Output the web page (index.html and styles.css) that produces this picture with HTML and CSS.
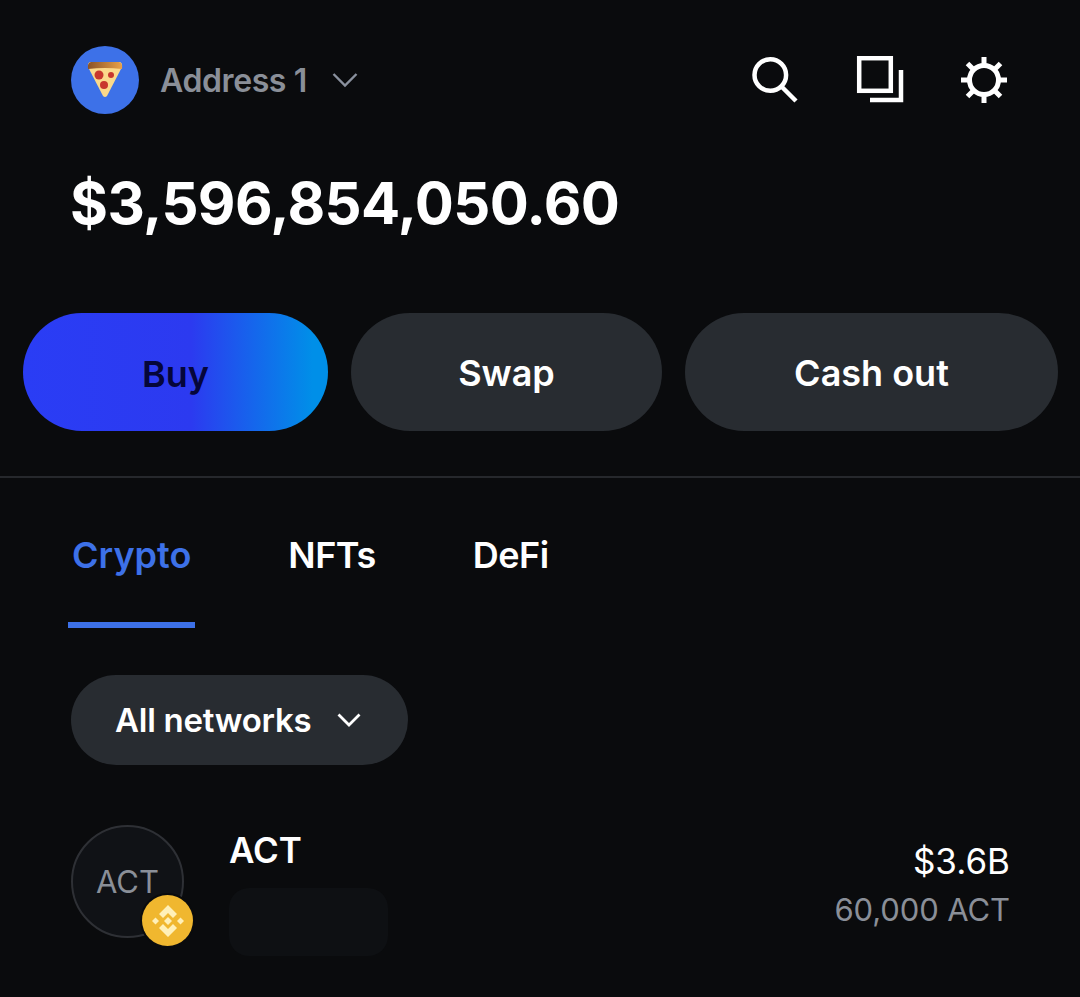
FILE: index.html
```html
<!DOCTYPE html>
<html lang="en">
<head>
    <meta charset="UTF-8">
    <meta name="viewport" content="width=device-width, initial-scale=1.0">
    <title>Wallet</title>
    <link rel="stylesheet" href="styles.css">
</head>
<body>
    <div class="header">
        <div class="account">
            <div class="avatar">
                <svg width="40" height="38" viewBox="0 0 40 38">
                    <defs>
                        <linearGradient id="crust" x1="0" x2="1" y1="0" y2="0">
                            <stop offset="0" stop-color="#8a5226"/>
                            <stop offset="1" stop-color="#e9a24a"/>
                        </linearGradient>
                    </defs>
                    <path d="M3 6 Q2.500 2 5 1 H35 Q37.500 2 37 6 L22 35 Q20 37 18 35 Z" fill="#fbd98a"/>
                    <path d="M3 8 Q2 2 6 1 H34 Q38 2 37 8 Q20 6 3 8 Z" fill="url(#crust)"/>
                    <circle cx="14" cy="14" r="4.500" fill="#c8372d"/>
                    <circle cx="26" cy="14" r="3" fill="#c8372d"/>
                    <circle cx="19" cy="24" r="4" fill="#c8372d"/>
                </svg>
            </div>
            <span class="account-name">Address 1</span>
            <svg class="account-caret" width="26" height="16" viewBox="0 0 26 16">
                <path d="M1.500 2 L13 13.500 L24.500 2" fill="none" stroke="#8a919e" stroke-width="2.400"/>
            </svg>
        </div>
        <div class="header-icons">
            <svg width="48" height="48" viewBox="0 0 48 48">
                <circle cx="18.300" cy="19" r="15.800" fill="none" stroke="#fff" stroke-width="4.500"/>
                <path d="M29 30 L44 45" stroke="#fff" stroke-width="4.500" fill="none"/>
            </svg>
            <svg width="48" height="48" viewBox="0 0 48 48">
                <rect x="3.200" y="2.200" width="31.600" height="32.600" fill="none" stroke="#fff" stroke-width="4.500"/>
                <path d="M14 44 H45 V14" fill="none" stroke="#fff" stroke-width="4.500"/>
            </svg>
            <svg width="48" height="48" viewBox="0 0 48 48">
                <circle cx="24" cy="24" r="14.500" fill="none" stroke="#fff" stroke-width="5"/>
                <path d="M24 1 V10 M24 38 V47 M1 24 H10 M38 24 H47 M7.500 7.500 L14 14 M34 34 L40.500 40.500 M40.500 7.500 L34 14 M14 34 L7.500 40.500" stroke="#fff" stroke-width="5" fill="none"/>
            </svg>
        </div>
    </div>

    <div class="balance">$3,596,854,050.60</div>

    <div class="actions">
        <div class="action action-buy">Buy</div>
        <div class="action action-swap">Swap</div>
        <div class="action action-cash">Cash out</div>
    </div>

    <div class="tabs">
        <div class="tab tab-active">Crypto</div>
        <div class="tab">NFTs</div>
        <div class="tab">DeFi</div>
    </div>

    <div class="filter">
        <div class="chip">
            All networks
            <svg width="24" height="14" viewBox="0 0 24 14">
                <path d="M1.500 1.500 L12 12 L22.500 1.500" fill="none" stroke="#fff" stroke-width="2.800"/>
            </svg>
        </div>
    </div>

    <div class="asset">
        <div class="asset-logo">
            <div class="asset-circle">ACT</div>
            <div class="chain-badge">
                <svg width="36" height="36" viewBox="0 0 36 36">
                    <g fill="#fff0b8">
                        <path d="M18 2 L27 11 L23 15 L18 10 L13 15 L9 11 Z"/>
                        <path d="M18 34 L27 25 L23 21 L18 26 L13 21 L9 25 Z"/>
                        <path d="M18 14 L22 18 L18 22 L14 18 Z"/>
                        <path d="M5.500 14.500 L9 18 L5.500 21.500 L2 18 Z"/>
                        <path d="M30.500 14.500 L34 18 L30.500 21.500 L27 18 Z"/>
                    </g>
                </svg>
            </div>
        </div>
        <div class="asset-info">
            <div class="asset-name">ACT</div>
            <div class="asset-placeholder"></div>
        </div>
        <div class="asset-values">
            <div class="asset-usd">$3.6B</div>
            <div class="asset-amount">60,000 ACT</div>
        </div>
    </div>
</body>
</html>
```

FILE: styles.css
```css
html, body {
    height: 100%;
}
body {
    font-family: Inter, "Liberation Sans", sans-serif;
    margin: 0;
    padding: 0;
    background-color: #0a0b0d;
    color: #fff;
    overflow: hidden;
}
.header {
    display: flex;
    justify-content: space-between;
    align-items: center;
    padding: 46px 72px 0 71px;
}
.account {
    display: flex;
    align-items: center;
}
.avatar {
    width: 68px;
    height: 68px;
    border-radius: 50%;
    background-color: #3d71e8;
    display: flex;
    align-items: center;
    justify-content: center;
}
.account-name {
    margin-left: 21px;
    font-size: 32px;
    font-weight: 600;
    letter-spacing: -0.4px;
    color: #8a8f98;
}
.account-caret {
    margin-left: 25px;
}
.header-icons {
    display: flex;
    align-items: center;
    gap: 56px;
}
.balance {
    padding: 49px 0 0 70px;
    font-size: 58px;
    line-height: 80px;
    font-weight: 650;
    letter-spacing: -0.6px;
}
.actions {
    display: flex;
    gap: 23px;
    margin-top: 70px;
    padding: 0 22px 45px 23px;
    border-bottom: 2px solid #26282c;
}
.action {
    height: 118px;
    box-sizing: border-box;
    padding-top: 2px;
    border-radius: 59px;
    display: flex;
    align-items: center;
    justify-content: center;
    font-size: 36px;
    font-weight: 600;
    background-color: #282c31;
}
.action-buy {
    width: 305px;
    padding-top: 4px;
    color: #05063a;
    background: linear-gradient(90deg, #2a3df5 0%, #2c3af0 55%, #008fe8 95%);
}
.action-swap {
    width: 311px;
}
.action-cash {
    flex: 1;
}
.tabs {
    display: flex;
    padding-left: 68px;
    gap: 89px;
}
.tab {
    height: 144px;
    box-sizing: border-box;
    padding: 54px 4px 0;
    font-size: 36px;
    line-height: 46px;
    font-weight: 600;
    letter-spacing: -0.5px;
}
.tab-active {
    color: #3d71e8;
    border-bottom: 6px solid #3d71e8;
    height: 150px;
    letter-spacing: 0;
}
.filter {
    margin-top: 47px;
    padding-left: 71px;
}
.chip {
    display: inline-flex;
    align-items: center;
    gap: 26px;
    height: 90px;
    box-sizing: border-box;
    padding: 0 47px 0 44px;
    border-radius: 45px;
    background-color: #282c31;
    font-size: 33px;
    font-weight: 600;
    letter-spacing: -0.25px;
}
.asset {
    display: flex;
    padding: 60px 70px 0 71px;
}
.asset-logo {
    position: relative;
    width: 113px;
    height: 113px;
}
.asset-circle {
    width: 113px;
    height: 113px;
    box-sizing: border-box;
    border: 2px solid #2e3035;
    border-radius: 50%;
    background-color: #101216;
    color: #8a8f98;
    font-size: 31px;
    display: flex;
    align-items: center;
    justify-content: center;
}
.chain-badge {
    position: absolute;
    left: 71px;
    top: 70px;
    width: 51px;
    height: 51px;
    border-radius: 50%;
    background-color: #f0b72f;
    box-shadow: 0 0 0 2px #0a0b0d;
    display: flex;
    align-items: center;
    justify-content: center;
}
.asset-info {
    margin-left: 45px;
    flex: 1;
}
.asset-name {
    font-size: 35px;
    line-height: 50px;
    font-weight: 600;
}
.asset-placeholder {
    margin-top: 13px;
    width: 159px;
    height: 68px;
    border-radius: 20px;
    background-color: #0e1013;
}
.asset-values {
    text-align: right;
    padding-top: 13px;
}
.asset-usd {
    font-size: 35px;
    line-height: 46px;
}
.asset-amount {
    margin-top: 3px;
    font-size: 31px;
    line-height: 46px;
    letter-spacing: -0.1px;
    color: #8a8f98;
}
```
